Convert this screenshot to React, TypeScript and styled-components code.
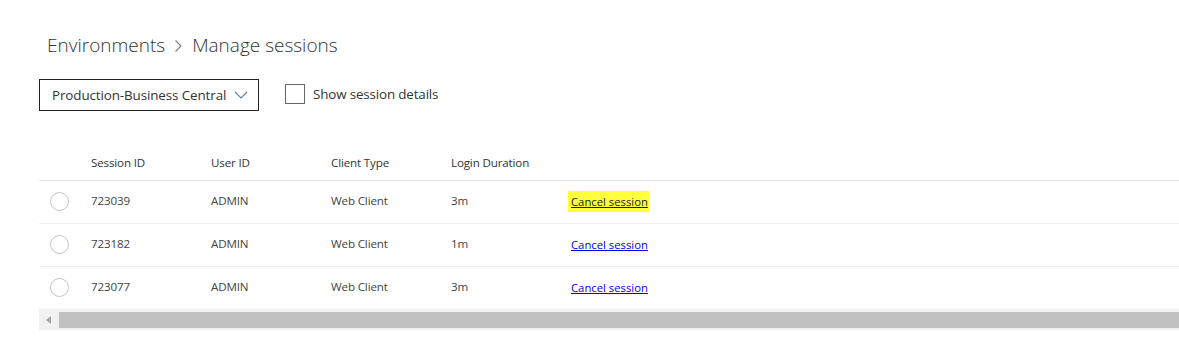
import React, { FC, useState } from "react";
import styled, { createGlobalStyle } from "styled-components";

interface Session {
  id: string;
  user: string;
  client: string;
  duration: string;
}

const sessions: Session[] = [
  { id: "723039", user: "ADMIN", client: "Web Client", duration: "3m" },
  { id: "723182", user: "ADMIN", client: "Web Client", duration: "1m" },
  { id: "723077", user: "ADMIN", client: "Web Client", duration: "3m" },
];

const GlobalStyle = createGlobalStyle`
  html, body {
    margin: 0;
    padding: 0;
    background: #fff;
    font-family: "Open Sans", "Noto Sans", sans-serif;
    overflow: hidden;
  }
`;

const App: FC = () => {
  const [showDetails, setShowDetails] = useState(false);

  return (
    <Page>
      <GlobalStyle />
      <Breadcrumb>
        <Crumb>Environments</Crumb>
        <Separator>
          <svg width="9" height="14" viewBox="0 0 9 14">
            <path d="M1.5 1.5 L7 7 L1.5 12.5" fill="none" stroke="#7a7a7a" strokeWidth="1.1" />
          </svg>
        </Separator>
        <Crumb>Manage sessions</Crumb>
      </Breadcrumb>

      <Toolbar>
        <Dropdown>
          Production-Business Central
          <svg width="14" height="8" viewBox="0 0 14 8">
            <path d="M1 1 L7 7 L13 1" fill="none" stroke="#5b7fa6" strokeWidth="1.1" />
          </svg>
        </Dropdown>
        <CheckLabel onClick={() => setShowDetails(!showDetails)}>
          <CheckBox $checked={showDetails} />
          Show session details
        </CheckLabel>
      </Toolbar>

      <Table>
        <HeaderRow>
          <Cell />
          <HeadCell>Session ID</HeadCell>
          <HeadCell>User ID</HeadCell>
          <HeadCell>Client Type</HeadCell>
          <HeadCell>Login Duration</HeadCell>
          <Cell />
        </HeaderRow>
        {sessions.map((s, i) => (
          <Row key={s.id}>
            <Cell>
              <Radio />
            </Cell>
            <Cell>{s.id}</Cell>
            <Cell>{s.user}</Cell>
            <Cell>{s.client}</Cell>
            <Cell>{s.duration}</Cell>
            <Cell>
              <CancelLink href="#" $highlight={i === 0}>
                Cancel session
              </CancelLink>
            </Cell>
          </Row>
        ))}
        <ScrollBar>
          <ScrollArrow>
            <svg width="6" height="8" viewBox="0 0 6 8">
              <path d="M5 0 L5 8 L0 4 Z" fill="#a3a3a3" />
            </svg>
          </ScrollArrow>
          <ScrollThumb />
        </ScrollBar>
      </Table>
    </Page>
  );
};

export default App;

const Page = styled.div`
  width: 1179px;
  height: 347px;
  box-sizing: border-box;
  padding: 31px 0 0 39px;
`;

const Breadcrumb = styled.div`
  display: flex;
  align-items: center;
  gap: 9px;
  padding-left: 8px;
  height: 28px;
`;

const Crumb = styled.span`
  font-size: 19px;
  font-weight: 300;
  color: #333;
`;

const Separator = styled.span`
  display: flex;
  align-items: center;
  padding-top: 2px;
`;

const Toolbar = styled.div`
  display: flex;
  align-items: center;
  gap: 26px;
  margin-top: 20px;
`;

const Dropdown = styled.div`
  box-sizing: border-box;
  width: 220px;
  height: 32px;
  border: 1px solid #222;
  display: flex;
  align-items: center;
  justify-content: space-between;
  padding: 0 10px 0 12px;
  font-size: 13.4px;
  color: #333;
  letter-spacing: -0.1px;
`;

const CheckLabel = styled.label`
  display: flex;
  align-items: center;
  gap: 8px;
  font-size: 13.4px;
  color: #333;
  letter-spacing: -0.15px;
  margin-top: -3px;
`;

const CheckBox = styled.span<{ $checked: boolean }>`
  box-sizing: border-box;
  width: 20px;
  height: 20px;
  border: 1px solid #666;
  background: ${(p) => (p.$checked ? "#0078d4" : "#fff")};
`;

const Table = styled.div`
  margin-top: 35px;
  width: 1140px;
`;

const gridCols = "40px 120px 120px 120px 120px 1fr";

const HeaderRow = styled.div`
  display: grid;
  grid-template-columns: ${gridCols};
  align-items: center;
  box-sizing: border-box;
  height: 35px;
  padding-bottom: 1px;
  border-bottom: 1px solid #e6e6e6;
`;

const Row = styled.div`
  display: grid;
  grid-template-columns: ${gridCols};
  align-items: center;
  box-sizing: border-box;
  height: 43px;
  padding-bottom: 4px;
  border-bottom: 1px solid #efefef;
  &:last-of-type {
    border-bottom: none;
  }
`;

const Cell = styled.div`
  padding-left: 12px;
  font-size: 11.6px;
  color: #444;
  letter-spacing: -0.15px;
  display: flex;
  align-items: center;
  &:first-child {
    padding-left: 0;
    justify-content: center;
  }
`;

const HeadCell = styled(Cell)`
  color: #333;
`;

const Radio = styled.span`
  box-sizing: border-box;
  width: 19px;
  height: 19px;
  border-radius: 50%;
  border: 1px solid #c6c6c6;
  margin-top: 2px;
`;

const CancelLink = styled.a<{ $highlight: boolean }>`
  font-size: 11.3px;
  letter-spacing: 0px;
  color: ${(p) => (p.$highlight ? "#222" : "#0000ee")};
  background: ${(p) => (p.$highlight ? "#ffff40" : "transparent")};
  text-decoration: underline;
  padding: 3px 1px 3px 3px;
  margin-left: -3px;
  margin-top: 3px;
`;

const ScrollBar = styled.div`
  display: flex;
  align-items: center;
  height: 20px;
  background: #f1f1f1;
`;

const ScrollArrow = styled.div`
  width: 20px;
  display: flex;
  justify-content: center;
  align-items: center;
`;

const ScrollThumb = styled.div`
  flex: 1;
  height: 16px;
  background: #c1c1c1;
`;
